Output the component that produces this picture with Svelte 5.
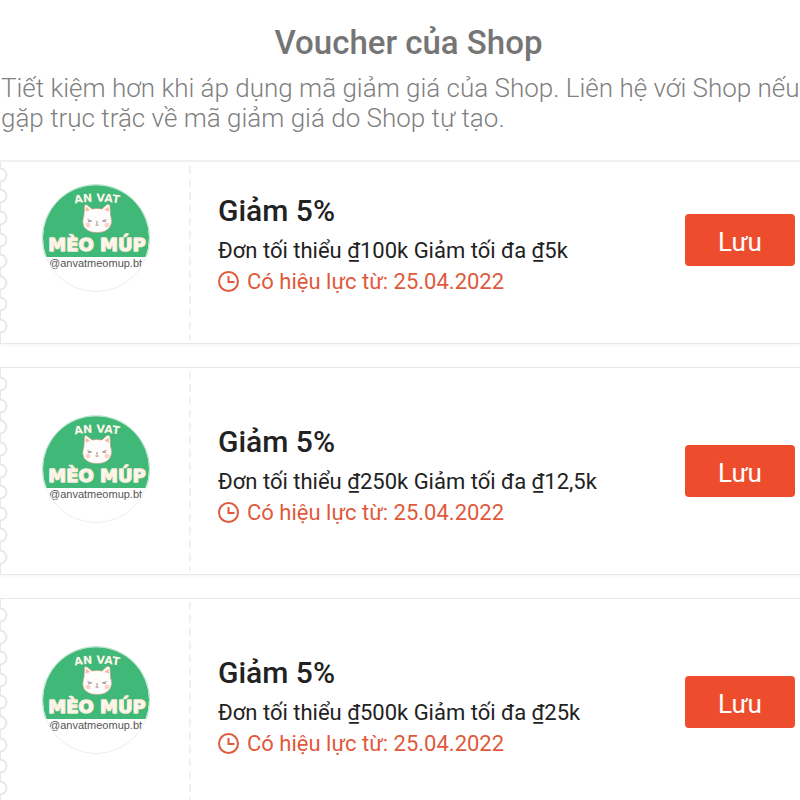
<script lang="ts">
    const vouchers = [
        { id: 1, title: "Giảm 5%", terms: "Đơn tối thiểu ₫100k Giảm tối đa ₫5k", date: "25.04.2022" },
        { id: 2, title: "Giảm 5%", terms: "Đơn tối thiểu ₫250k Giảm tối đa ₫12,5k", date: "25.04.2022" },
        { id: 3, title: "Giảm 5%", terms: "Đơn tối thiểu ₫500k Giảm tối đa ₫25k", date: "25.04.2022" }
    ];
    // half circles punched along the left edge of a ticket
    const notches = [17, 39, 60, 82, 104, 125, 147, 168, 190];
    let saved: number[] = $state([]);

    function save(id: number) {
        if (!saved.includes(id)) saved.push(id);
    }
</script>

<div class="page">
    <header>
        <h1>Voucher của Shop</h1>
        <p>Tiết kiệm hơn khi áp dụng mã giảm giá của Shop. Liên hệ với Shop nếu gặp trục trặc về mã giảm giá do Shop tự tạo.</p>
    </header>

    <main>
        {#each vouchers as v (v.id)}
            <article class="ticket">
                <svg class="notches" viewBox="0 0 8 208" aria-hidden="true">
                    {#each notches as y}
                        <circle cx="0" cy={y} r="6.5" />
                    {/each}
                </svg>
                <div class="brand">
                    <svg class="logo" viewBox="0 0 108 108">
                        <defs>
                            <clipPath id="round-{v.id}"><circle cx="54" cy="54" r="53.5" /></clipPath>
                            <path id="arc-{v.id}" d="M22 22 Q54 13 88 22" />
                        </defs>
                        <g clip-path="url(#round-{v.id})">
                            <rect width="108" height="108" fill="#fff" />
                            <rect width="108" height="73" fill="#3fb878" />
                            <text class="arc-text"><textPath href="#arc-{v.id}" startOffset="50%">AN VAT</textPath></text>
                            <path
                                d="M42 31 L42.500 22 Q43 19.500 45 21 L50 25 Q55 24 60 25 L65 20.500 Q67.500 19.500 68 22 L68.500 31 Q71 38 68 43 Q64 48.500 55 48.500 Q46 48.500 42 43 Q39.500 38 42 31Z"
                                fill="#fffdfb" stroke="#c99a80" stroke-width=".6" />
                            <path d="M43.500 27.500 L44 22.500 L48 26Z M67 27.500 L66.500 22.500 L62.500 26Z" fill="#f6b9a5" />
                            <circle cx="46" cy="41" r="2.500" fill="#fbd3cd" />
                            <circle cx="65" cy="41" r="2.500" fill="#fbd3cd" />
                            <path
                                d="M45.500 35.500 L49.500 37 L46 37.500 M64.500 35.500 L60.500 37 L64 37.500 M55 37 V40.500 M53.500 41 Q55 41.500 56.500 41"
                                fill="none" stroke="#85747a" stroke-width=".8" />
                            <text class="name" x="55" y="67">MÈO MÚP</text>
                            <text class="handle" x="7" y="83">@anvatmeomup.bt</text>
                        </g>
                        <circle cx="54" cy="54" r="53.500" fill="none" stroke="#ededed" />
                        <path d="M3.500 72 A53.500 53.500 0 1 1 104.500 72" fill="none" stroke="#b6e8cc" />
                    </svg>
                </div>
                <div class="info">
                    <h2>{v.title}</h2>
                    <p class="terms">{v.terms}</p>
                    <p class="date">
                        <svg class="clock" viewBox="0 0 22 22" aria-hidden="true">
                            <circle cx="10.500" cy="10.500" r="9.500" />
                            <path d="M10.500 5 V11 H16.500" />
                        </svg>
                        Có hiệu lực từ: {v.date}
                    </p>
                </div>
                <button disabled={saved.includes(v.id)} onclick={() => save(v.id)}>Lưu</button>
            </article>
        {/each}
    </main>
</div>

<style>
    :global(body) {
        margin: 0;
        background: #fff;
    }
    .page {
        height: 100vh;
        display: flex;
        flex-direction: column;
        overflow: hidden;
        font-family: Roboto, "Noto Sans", sans-serif;
        color: #222;
    }
    h1, h2, p {
        margin: 0;
    }
    header {
        flex: none;
        padding: 23px 0 27px 1px;
        border-bottom: 2px solid #f0f0f0;
    }
    h1 {
        padding-left: 16px;
        margin-bottom: 10px;
        font-size: 33px;
        line-height: 40px;
        font-weight: 500;
        text-align: center;
        color: #757575;
    }
    header p {
        margin-right: -6px;
        font-size: 26px;
        line-height: 30px;
        font-weight: 300;
        color: #808080;
    }
    /* the list slides under the header */
    main {
        flex: 1;
        min-height: 0;
        overflow: hidden;
        display: flex;
        flex-direction: column;
        gap: 23px;
    }
    .ticket {
        position: relative;
        flex: none;
        box-sizing: border-box;
        height: 208px;
        display: flex;
        align-items: center;
        padding-right: 5px;
        border: 1px solid #e8e8e8;
        border-width: 1px 0 1px 1px;
        box-shadow: 0 2px 4px rgba(0, 0, 0, 0.03);
    }
    .ticket:first-child {
        margin-top: -26px;
    }
    .notches {
        position: absolute;
        left: -1px;
        top: -1px;
        width: 8px;
        height: 208px;
    }
    .notches circle {
        fill: #fff;
        stroke: #e8e8e8;
        stroke-width: 2;
    }
    .brand {
        flex: none;
        box-sizing: border-box;
        width: 190px;
        height: 200px;
        padding-bottom: 4px;
        display: flex;
        align-items: center;
        justify-content: center;
        background: repeating-linear-gradient(#f0f0f0 0 8px, transparent 8px 13px) right / 2px 100% no-repeat;
    }
    .logo {
        width: 108px;
        height: 108px;
    }
    .arc-text {
        font: 700 11px "DejaVu Sans", sans-serif;
        text-anchor: middle;
        fill: #fff6ea;
    }
    .name {
        font: 700 18px "DejaVu Sans", sans-serif;
        text-anchor: middle;
        fill: #fffaf2;
        stroke: #fdeedd;
        stroke-width: 1.5;
        stroke-linejoin: round;
    }
    .handle {
        font: 400 11px "Liberation Sans", sans-serif;
        fill: #555;
    }
    .info {
        flex: 1;
        min-width: 0;
        padding: 8px 0 0 27px;
    }
    h2 {
        font-size: 30px;
        line-height: 40px;
        font-weight: 500;
    }
    .terms, .date {
        font-size: 22px;
        line-height: 31px;
    }
    .terms {
        margin-top: 4px;
    }
    .date {
        display: flex;
        align-items: center;
        gap: 7px;
        color: #e0593c;
    }
    .clock {
        width: 22px;
        height: 22px;
        fill: none;
        stroke: #e0593c;
        stroke-width: 2;
    }
    button {
        flex: none;
        width: 110px;
        height: 52px;
        padding: 4px 0 0;
        border: 0;
        border-radius: 4px;
        background: #ee4d2d;
        color: #fff;
        font: 400 26px Roboto, sans-serif;
        cursor: pointer;
    }
    button:disabled {
        opacity: 0.6;
    }
</style>
